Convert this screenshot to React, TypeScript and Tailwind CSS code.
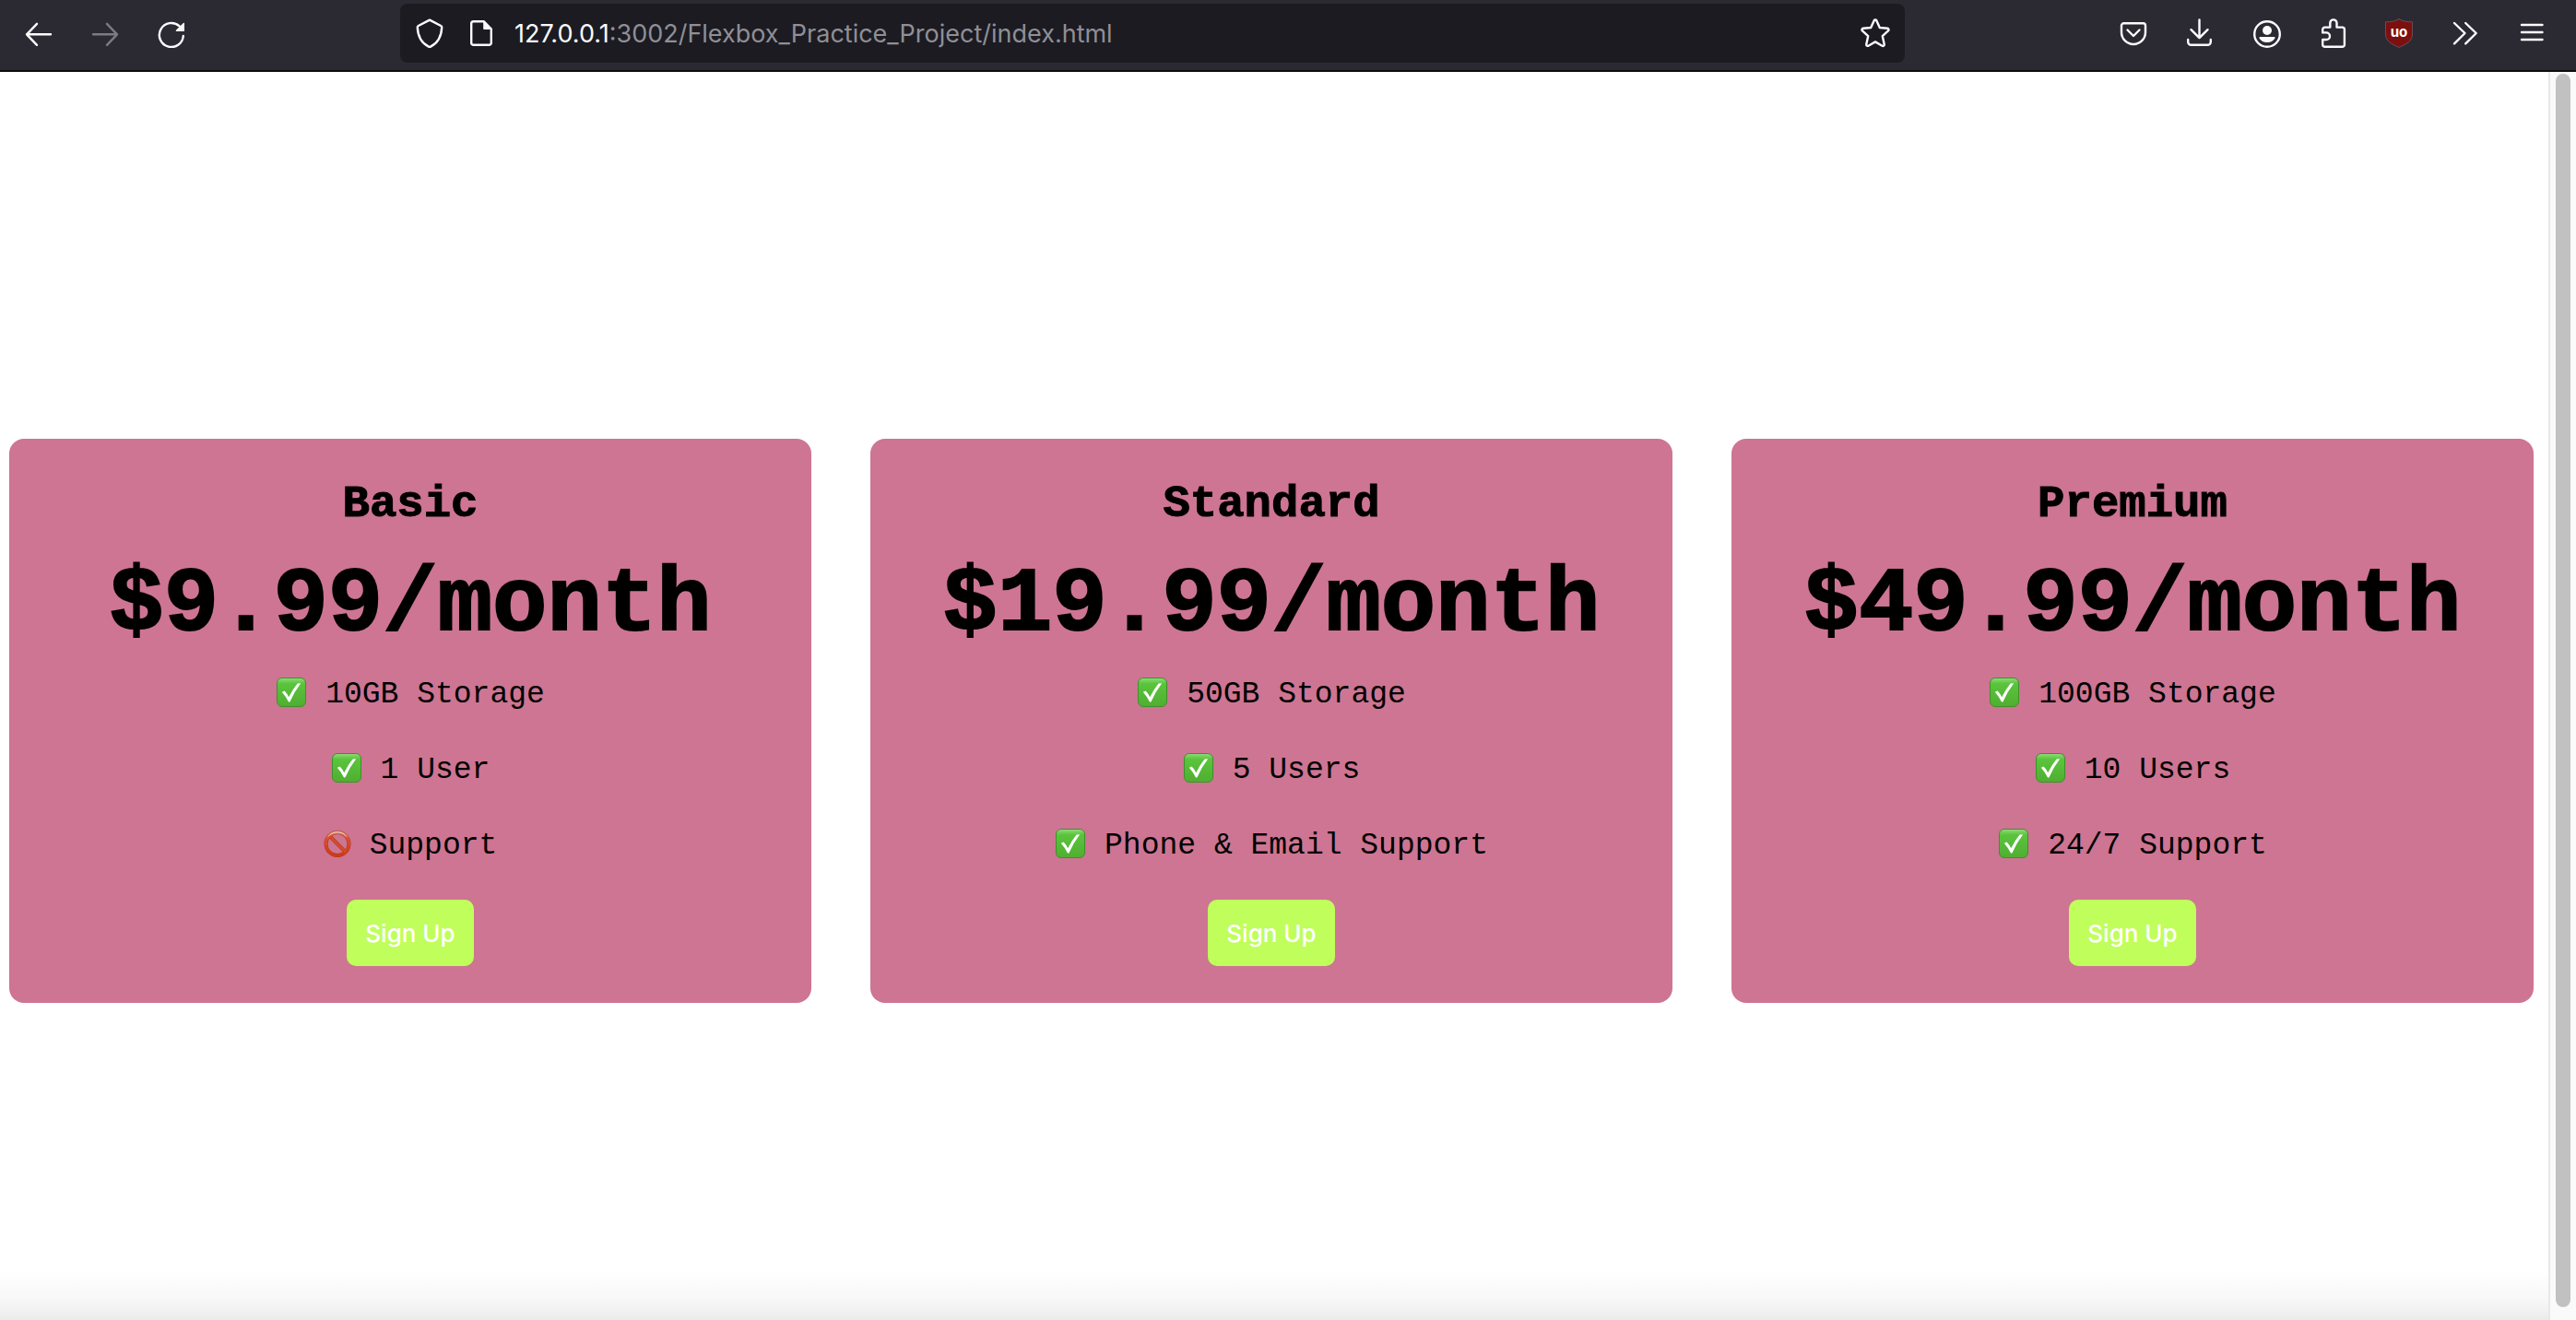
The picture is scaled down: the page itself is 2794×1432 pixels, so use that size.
import type { ReactNode } from "react";

function Icon({ children }: { children: ReactNode }) {
  return (
    <svg
      viewBox="0 0 32 32"
      className="size-8 shrink-0"
      fill="none"
      stroke="currentColor"
      strokeWidth="2.4"
      strokeLinecap="round"
      strokeLinejoin="round"
      aria-hidden="true"
    >
      {children}
    </svg>
  );
}

function ToolButton({ label, disabled, children }: { label: string; disabled?: boolean; children: ReactNode }) {
  return (
    <button
      type="button"
      aria-label={label}
      disabled={disabled}
      className="flex h-16 w-[72px] shrink-0 items-center justify-center text-[#fbfbfe] disabled:text-[#7c7b82]"
    >
      <Icon>{children}</Icon>
    </button>
  );
}

function Toolbar() {
  return (
    <header className="flex items-center border-b-2 border-[#0c0c0d] bg-[#2b2a33] pt-1 pr-3 pb-2 pl-1.5">
      <nav className="flex w-[428px]" aria-label="Navigation">
        <ToolButton label="Back">
          <path d="M29 17.3H3M14 5.8 3 17.3 14 28.8" />
        </ToolButton>
        <ToolButton label="Forward" disabled>
          <path d="M3 17.3h26M18 5.8l11 11.5L18 28.8" />
        </ToolButton>
        <ToolButton label="Reload">
          <path d="M28.8 19A13 13 0 1 1 24.6 8.4" />
          <path d="M21.4 13.2H29.3V5.4z" fill="currentColor" strokeWidth="1.4" />
        </ToolButton>
      </nav>
      <div className="flex h-16 flex-1 items-center rounded-lg bg-[#1c1b22] px-4 text-[#fbfbfe]">
        <Icon>
          <path d="M16 1.6 28.2 8a1.8 1.8 0 0 1 1 1.8C28.800 19 24.500 27 17 30.600a2 2 0 0 1-2 0C7.500 27 3.200 19 2.800 9.800a1.800 1.800 0 0 1 1-1.800z" />
        </Icon>
        <span className="ml-6 flex">
          <Icon>
            <path d="M18.500 3.200H7.600a2.400 2.400 0 0 0-2.400 2.400V26.400a2.400 2.400 0 0 0 2.400 2.400H24.400a2.400 2.400 0 0 0 2.400-2.400V11.500z" />
            <path d="M19 3.200V11.200H26.800z" fill="currentColor" strokeWidth="1.6" />
          </Icon>
        </span>
        <div
          className="ml-5 flex-1 pt-0.5 font-['Inter',sans-serif] text-[27px] leading-8 text-[#8f8f95]"
          aria-label="Address"
        >
          <span className="text-[#fbfbfe]">127.0.0.1</span>:3002/Flexbox_Practice_Project/index.html
        </div>
        <button type="button" aria-label="Bookmark this page">
          <Icon>
            <path d="M14.600 2.400a1.600 1.600 0 0 1 2.800 0L20.800 10l8.400.8a1.500 1.500 0 0 1 .8 2.600l-6.200 5.800 1.900 8.900a1.500 1.500 0 0 1-2.200 1.600L16 25.400l-7.500 4.300a1.500 1.500 0 0 1-2.200-1.600l1.900-8.900L2 13.400a1.500 1.500 0 0 1 .8-2.600l8.400-.8z" />
          </Icon>
        </button>
      </div>
      <div className="flex w-[716px] justify-end">
        <ToolButton label="Save to Pocket">
          <path d="M5.500 5.300H26.500a2.500 2.500 0 0 1 2.500 2.500V15a13 13 0 0 1-26 0V7.800a2.500 2.500 0 0 1 2.500-2.500z" />
          <path d="M9.500 12.500 16 19l6.500-6.500" />
        </ToolButton>
        <ToolButton label="Downloads">
          <path d="M15.500 1.400V21M6.500 12.200l9 9 9-9M3.200 23v2.400a3.400 3.400 0 0 0 3.400 3.400H24.400a3.400 3.400 0 0 0 3.400-3.400V23" />
        </ToolButton>
        <ToolButton label="Account">
          <circle cx="17" cy="17" r="13.800" />
          <circle cx="17" cy="13" r="5" fill="currentColor" stroke="none" />
          <path d="M9.500 20H24.500a1 1 0 0 1 1 1.500Q22.500 26 17 26T8.500 21.500a1 1 0 0 1 1-1.500z" fill="currentColor" stroke="none" />
        </ToolButton>
        <ToolButton label="Extensions">
          <path d="M5.200 15.400V12a2.400 2.400 0 0 1 2.400-2.400h5.700V5a3.600 3.600 0 0 1 7.200 0V9.600h6a2.400 2.400 0 0 1 2.400 2.400V28.400a2.400 2.400 0 0 1-2.400 2.400H7.600a2.400 2.400 0 0 1-2.400-2.400V23h4a3.800 3.800 0 0 0 0-7.600z" />
        </ToolButton>
        <ToolButton label="uBlock Origin">
          <path
            d="M16 .6C12 3.200 7.500 3.800 1.500 3.800V17C1.500 24.500 8 28 16 31.400 24 28 30.500 24.500 30.500 17V3.800C24.500 3.800 20 3.200 16 .6z"
            fill="#7c0f0f"
            stroke="#6a5a62"
            strokeWidth="0.8"
          />
          <text x="16" y="19.500" textAnchor="middle" className="fill-white stroke-none font-['Inter',sans-serif] text-[15px] font-bold">
            uo
          </text>
        </ToolButton>
        <ToolButton label="More tools">
          <path d="M4 5l11.500 11L4 27.300M16.200 5l11.500 11L16.200 27.300" />
        </ToolButton>
        <ToolButton label="Open application menu">
          <path d="M5 7h22.500M5 15h22.500M5 23h22.500" />
        </ToolButton>
      </div>
    </header>
  );
}

function CheckMark() {
  return (
    <svg viewBox="0 0 34 34" className="size-[34px] shrink-0" role="img" aria-label="Included">
      <defs>
        <linearGradient id="tick-fill" x1="0" y1="0" x2="0" y2="1">
          <stop offset="0" stopColor="#8fdc7c" />
          <stop offset="0.2" stopColor="#5ac43c" />
          <stop offset="1" stopColor="#50ae31" />
        </linearGradient>
      </defs>
      <rect x="1.500" y="1.500" width="31" height="31" rx="5.500" fill="url(#tick-fill)" stroke="#418f2c" />
      <path d="M6.800 16.800 9.600 15.600Q12.400 18.400 14.200 22.200 18.500 13.500 23.600 7.400L27.200 7.200Q20 16.500 15.400 27.600H14Q11 21.500 6.800 16.800z" fill="#fff" />
    </svg>
  );
}

function Prohibited() {
  return (
    <svg viewBox="0 0 30 34" className="h-[34px] w-[30px] shrink-0" role="img" aria-label="Not included">
      <defs>
        <linearGradient id="ban-stroke" x1="0" y1="0" x2="0" y2="1">
          <stop offset="0" stopColor="#e08a74" />
          <stop offset="0.250" stopColor="#dd4f2e" />
          <stop offset="1" stopColor="#d03a16" />
        </linearGradient>
      </defs>
      <g fill="none">
        <circle cx="15" cy="17.500" r="12.500" stroke="#a93a22" strokeWidth="4" />
        <path d="M6.200 8.700 23.800 26.300" stroke="#a93a22" strokeWidth="4" />
        <circle cx="15" cy="17.500" r="12.500" stroke="url(#ban-stroke)" strokeWidth="3" />
        <path d="M6.200 8.700 23.800 26.300" stroke="#d94a28" strokeWidth="2.800" />
        <path d="M5 9.500A12.800 12.800 0 0 1 25 9.500" stroke="#f6c9bd" strokeWidth="1" />
      </g>
    </svg>
  );
}

type Plan = { name: string; price: string; features: { text: string; included: boolean }[] };

const plans: Plan[] = [
  {
    name: "Basic",
    price: "$9.99/month",
    features: [
      { text: "10GB Storage", included: true },
      { text: "1 User", included: true },
      { text: "Support", included: false },
    ],
  },
  {
    name: "Standard",
    price: "$19.99/month",
    features: [
      { text: "50GB Storage", included: true },
      { text: "5 Users", included: true },
      { text: "Phone & Email Support", included: true },
    ],
  },
  {
    name: "Premium",
    price: "$49.99/month",
    features: [
      { text: "100GB Storage", included: true },
      { text: "10 Users", included: true },
      { text: "24/7 Support", included: true },
    ],
  },
];

function PlanCard({ plan }: { plan: Plan }) {
  return (
    <section className="flex flex-col items-center rounded-2xl bg-[#cd7592] py-10 font-['Liberation_Mono',monospace] text-black">
      <h2 className="text-[49px] leading-[62px] font-bold [-webkit-text-stroke:1px_black]">{plan.name}</h2>
      <p className="mt-5 text-[99px] leading-[118px] font-bold [-webkit-text-stroke:2px_black]">{plan.price}</p>
      <ul className="mt-[18px] flex flex-col items-center gap-[42px] text-[33px] leading-10">
        {plan.features.map((feature) => (
          <li key={feature.text} className="flex items-start gap-5">
            {feature.included ? <CheckMark /> : <Prohibited />}
            {feature.text}
          </li>
        ))}
      </ul>
      <button
        type="button"
        className="mt-[38px] rounded-[10px] bg-[#c0fe5b] px-5 pt-[21px] pb-[19px] font-['Inter',sans-serif] text-[26px] leading-8 font-medium text-white"
      >
        Sign Up
      </button>
    </section>
  );
}

export default function App() {
  return (
    <div className="flex min-h-screen flex-col bg-white">
      <Toolbar />
      <div className="flex flex-1">
        <main className="flex flex-1 flex-col justify-center bg-linear-to-t from-[#ebebeb] via-[#f8f8f8] via-[24px] to-white to-[54px] pt-[54px] pr-4 pl-2.5">
          <div className="grid grid-cols-3 gap-16">
            {plans.map((plan) => (
              <PlanCard key={plan.name} plan={plan} />
            ))}
          </div>
        </main>
        <div className="flex w-[30px] border-l-2 border-[#e8e8e8] bg-[#fafafa] pt-0.5 pr-1.5 pb-3.5 pl-1.5">
          <div className="w-4 rounded-full bg-[#c1c1c1]" />
        </div>
      </div>
    </div>
  );
}
